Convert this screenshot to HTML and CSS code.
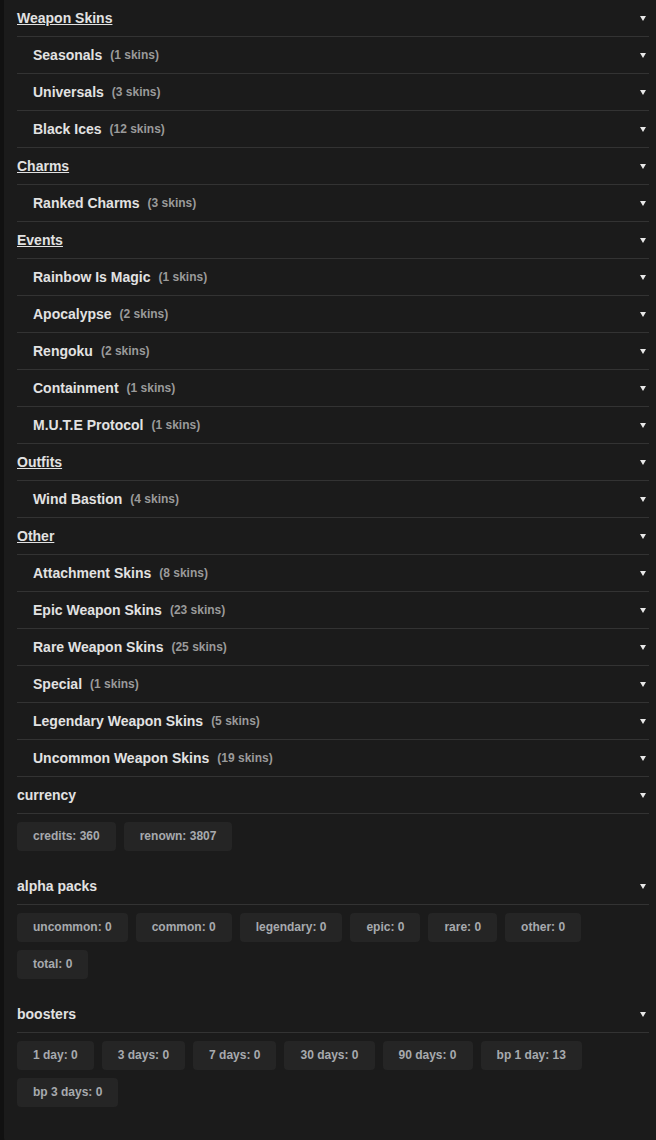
FILE: index.html
```html
<!DOCTYPE html>
<html lang="en">
<head>
  <meta charset="UTF-8">
  <meta name="viewport" content="width=device-width, initial-scale=1.0">
  <title>Inventory</title>
  <link rel="stylesheet" href="styles.css">
</head>
<body>
  <div class="panel">
    <!-- skins -->
    <div class="row group"><span class="group-title">Weapon Skins</span><span class="caret"></span></div>
    <div class="row sub"><span class="sub-title">Seasonals</span><span class="count">(1 skins)</span><span class="caret"></span></div>
    <div class="row sub"><span class="sub-title">Universals</span><span class="count">(3 skins)</span><span class="caret"></span></div>
    <div class="row sub"><span class="sub-title">Black Ices</span><span class="count">(12 skins)</span><span class="caret"></span></div>

    <div class="row group"><span class="group-title">Charms</span><span class="caret"></span></div>
    <div class="row sub"><span class="sub-title">Ranked Charms</span><span class="count">(3 skins)</span><span class="caret"></span></div>

    <div class="row group"><span class="group-title">Events</span><span class="caret"></span></div>
    <div class="row sub"><span class="sub-title">Rainbow Is Magic</span><span class="count">(1 skins)</span><span class="caret"></span></div>
    <div class="row sub"><span class="sub-title">Apocalypse</span><span class="count">(2 skins)</span><span class="caret"></span></div>
    <div class="row sub"><span class="sub-title">Rengoku</span><span class="count">(2 skins)</span><span class="caret"></span></div>
    <div class="row sub"><span class="sub-title">Containment</span><span class="count">(1 skins)</span><span class="caret"></span></div>
    <div class="row sub"><span class="sub-title">M.U.T.E Protocol</span><span class="count">(1 skins)</span><span class="caret"></span></div>

    <div class="row group"><span class="group-title">Outfits</span><span class="caret"></span></div>
    <div class="row sub"><span class="sub-title">Wind Bastion</span><span class="count">(4 skins)</span><span class="caret"></span></div>

    <div class="row group"><span class="group-title">Other</span><span class="caret"></span></div>
    <div class="row sub"><span class="sub-title">Attachment Skins</span><span class="count">(8 skins)</span><span class="caret"></span></div>
    <div class="row sub"><span class="sub-title">Epic Weapon Skins</span><span class="count">(23 skins)</span><span class="caret"></span></div>
    <div class="row sub"><span class="sub-title">Rare Weapon Skins</span><span class="count">(25 skins)</span><span class="caret"></span></div>
    <div class="row sub"><span class="sub-title">Special</span><span class="count">(1 skins)</span><span class="caret"></span></div>
    <div class="row sub"><span class="sub-title">Legendary Weapon Skins</span><span class="count">(5 skins)</span><span class="caret"></span></div>
    <div class="row sub"><span class="sub-title">Uncommon Weapon Skins</span><span class="count">(19 skins)</span><span class="caret"></span></div>

    <!-- stats -->
    <div class="row section"><span class="section-title">currency</span><span class="caret"></span></div>
    <div class="chips">
      <span class="chip">credits: 360</span>
      <span class="chip">renown: 3807</span>
    </div>

    <div class="row section"><span class="section-title">alpha packs</span><span class="caret"></span></div>
    <div class="chips">
      <span class="chip">uncommon: 0</span>
      <span class="chip">common: 0</span>
      <span class="chip">legendary: 0</span>
      <span class="chip">epic: 0</span>
      <span class="chip">rare: 0</span>
      <span class="chip">other: 0</span>
      <span class="chip">total: 0</span>
    </div>

    <div class="row section"><span class="section-title">boosters</span><span class="caret"></span></div>
    <div class="chips">
      <span class="chip">1 day: 0</span>
      <span class="chip">3 days: 0</span>
      <span class="chip">7 days: 0</span>
      <span class="chip">30 days: 0</span>
      <span class="chip">90 days: 0</span>
      <span class="chip">bp 1 day: 13</span>
      <span class="chip">bp 3 days: 0</span>
    </div>
  </div>
</body>
</html>
```

FILE: styles.css
```css
body {
  margin: 0;
  padding: 0;
  background: #111111;
  font-family: 'Liberation Sans', Arial, sans-serif;
  color: #dddddd;
}

.panel {
  margin-left: 4px;
  min-height: 1140px;
  box-sizing: border-box;
  padding: 0 7px 20px 13px;
  background: #1b1b1b;
  border-bottom-left-radius: 6px;
}

.row {
  display: flex;
  align-items: center;
  height: 36px;
  border-bottom: 1px solid #333333;
}

.row.sub {
  padding-left: 16px;
}

.group-title {
  font-size: 14px;
  font-weight: bold;
  color: #e2e2e2;
  text-decoration: underline;
}

.sub-title,
.section-title {
  font-size: 14px;
  font-weight: bold;
  color: #e2e2e2;
}

.count {
  margin-left: 8px;
  font-size: 12px;
  font-weight: bold;
  color: #9a9a9a;
}

.caret {
  margin-left: auto;
  margin-right: 3px;
  width: 0;
  height: 0;
  border-left: 3.5px solid transparent;
  border-right: 3.5px solid transparent;
  border-top: 5px solid #e8e8e8;
}

.chips {
  display: flex;
  flex-wrap: wrap;
  gap: 8px 8px;
  padding: 8px 0 17px;
}

.chip {
  display: inline-flex;
  align-items: center;
  box-sizing: border-box;
  height: 29px;
  padding: 0 16px 2px;
  background: #252525;
  border-radius: 4px;
  font-size: 12px;
  font-weight: bold;
  color: #a7aaae;
}
```
